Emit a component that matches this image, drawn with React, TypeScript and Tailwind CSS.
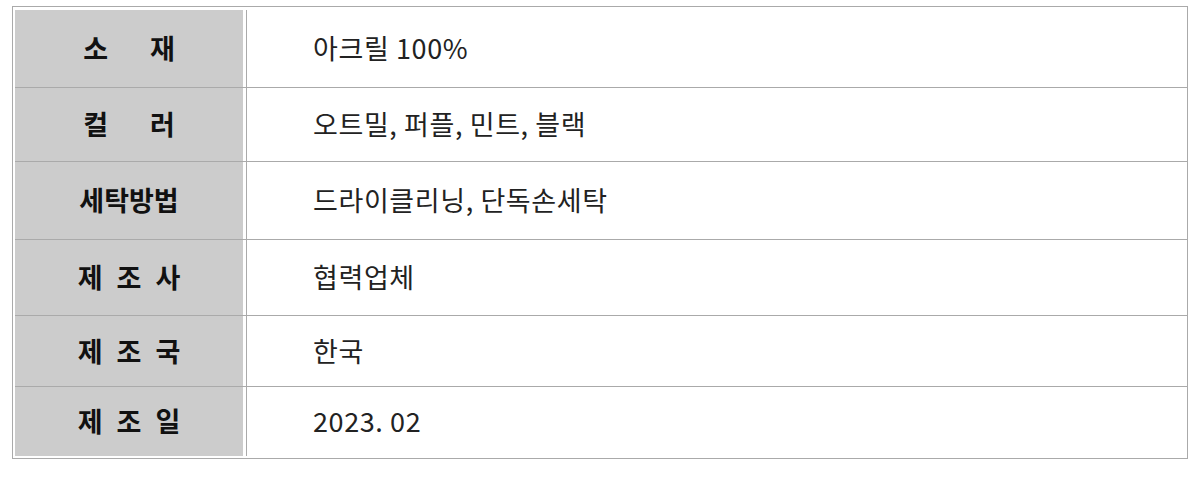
const rows = [
  { label: ["소", "재"], gap: "gap-[42px]", value: "아크릴 100%", h: "h-[77px]" },
  { label: ["컬", "러"], gap: "gap-[42px]", value: "오트밀, 퍼플, 민트, 블랙", h: "h-[74px]" },
  { label: ["세탁방법"], gap: "gap-0", value: "드라이클리닝, 단독손세탁", h: "h-[78px]" },
  { label: ["제", "조", "사"], gap: "gap-[14px]", value: "협력업체", h: "h-[76px]" },
  { label: ["제", "조", "국"], gap: "gap-[14px]", value: "한국", h: "h-[71px]" },
  { label: ["제", "조", "일"], gap: "gap-[14px]", value: "2023. 02", h: "h-[70px]" },
];

export default function App() {
  return (
    <div className="min-h-[486px] bg-white pt-[6px] pl-[12px] font-['Noto_Sans_CJK_KR',sans-serif]">
      <div className="w-[1176px] border border-[#aaa] pt-[3px] pb-[2px] pl-[2px]">
        {rows.map((row, i) => (
          <div
            key={i}
            className={`flex ${row.h} ${i > 0 ? "border-t border-[#aaa]" : ""}`}
          >
            <div className="flex w-[228px] items-center justify-center bg-[#cccccc]">
              <div className={`flex ${row.gap} text-[27px] font-bold text-[#111]`}>
                {row.label.map((ch, j) => (
                  <span key={j}>{ch}</span>
                ))}
              </div>
            </div>
            <div className="ml-[3px] flex flex-1 items-center border-l border-[#aaa] pl-[66px] text-[27px] tracking-[0.6px] text-[#222]">
              {row.value}
            </div>
          </div>
        ))}
      </div>
    </div>
  );
}
